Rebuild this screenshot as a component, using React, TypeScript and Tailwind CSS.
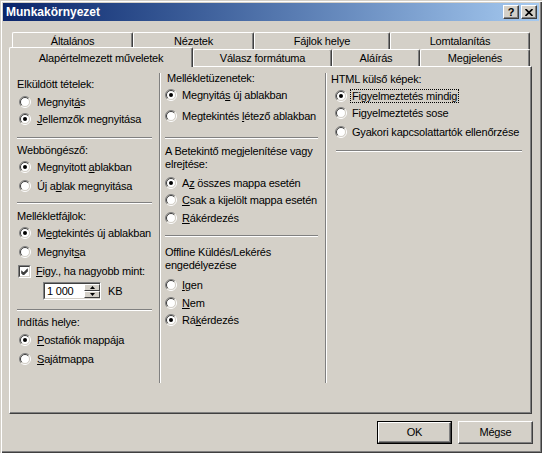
import React from "react";

const FONT = { fontFamily: '"Liberation Sans", Arial, sans-serif' };

// classic win2k radio button
const RadioDot = ({ on }: { on?: boolean }) => (
  <svg width="12" height="12" viewBox="0 0 12 12" className="shrink-0">
    <circle cx="6" cy="6" r="4.5" fill="#fff" />
    <path d="M2.1 9.9 A5.5 5.5 0 0 1 9.9 2.1" stroke="#808080" fill="none" />
    <path d="M9.9 2.1 A5.5 5.5 0 0 1 2.1 9.9" stroke="#fff" fill="none" />
    <path d="M2.8 9.2 A4.5 4.5 0 0 1 9.2 2.8" stroke="#404040" fill="none" />
    <path d="M9.2 2.8 A4.5 4.5 0 0 1 2.8 9.2" stroke="#d4d0c8" fill="none" />
    {on && <circle cx="6" cy="6" r="2" fill="#000" />}
  </svg>
);

const Radio = ({
  on,
  children,
  className = "",
  gap = "ml-[6px]",
}: {
  on?: boolean;
  children: React.ReactNode;
  className?: string;
  gap?: string;
}) => (
  <div className={`flex items-center h-[16px] whitespace-nowrap ${className}`}>
    <RadioDot on={on} />
    <span className={gap}>{children}</span>
  </div>
);

const Label = ({ children, className = "" }: { children: React.ReactNode; className?: string }) => (
  <div className={`flex items-center h-[16px] whitespace-nowrap ${className}`}>{children}</div>
);

const Sep = ({ className = "" }: { className?: string }) => (
  <div className={`h-[2px] border-t border-t-[#808080] border-b border-b-white ${className}`} />
);

const VLine = () => <div className="mt-[3px] h-[310px] w-[2px] border-l border-l-[#808080] border-r border-r-white shrink-0" />;

const Tab = ({ label, w }: { label: string; w: string }) => (
  <div
    className={`${w} h-[17px] flex items-center justify-center border-l border-t border-white border-r border-r-[#404040] rounded-tl-[2px] rounded-tr-[2px] shadow-[inset_-1px_0_#808080] whitespace-nowrap`}
  >
    {label}
  </div>
);

const TitleBtn = ({ children }: { children: React.ReactNode }) => (
  <div className="w-[16px] h-[14px] flex items-center justify-center bg-[#d4d0c8] border-t border-l border-white border-r border-b border-r-[#404040] border-b-[#404040] shadow-[inset_-1px_-1px_#808080]">
    {children}
  </div>
);

export default function App() {
  return (
    <div
      className="w-[542px] h-[453px] bg-[#d4d0c8] p-[3px] text-[11px] tracking-[-0.2px] text-black shadow-[inset_1px_1px_#d4d0c8,inset_2px_2px_#fff,inset_-1px_-1px_#404040,inset_-2px_-2px_#808080] flex flex-col overflow-hidden"
      style={FONT}
    >
      {/* title bar */}
      <div className="h-[18px] flex items-center bg-linear-to-r from-[#0a246a] to-[#a6caf0] pl-[3px] pr-[2px]">
        <span className="text-white font-bold text-[12px] tracking-normal">Munkakörnyezet</span>
        <div className="ml-auto flex gap-[2px]">
          <TitleBtn>
            <span className="font-bold text-[11px] leading-none">?</span>
          </TitleBtn>
          <TitleBtn>
            <svg width="8" height="7" viewBox="0 0 8 7">
              <path d="M0.5 0 L7.5 7 M7.5 0 L0.5 7" stroke="#000" strokeWidth="1.6" />
            </svg>
          </TitleBtn>
        </div>
      </div>

      {/* tabs */}
      <div className="mt-[11px] flex pl-[9px]">
        <Tab label="Általános" w="w-[121px]" />
        <Tab label="Nézetek" w="w-[121px]" />
        <Tab label="Fájlok helye" w="w-[136px]" />
        <Tab label="Lomtalanítás" w="w-[140px]" />
      </div>
      <div className="flex pl-[6px] h-[17px]">
        <div className="relative z-10 -mt-[2px] w-[184px] h-[20px] bg-[#d4d0c8] flex justify-center pt-[2px] border-l border-t border-white border-r border-r-[#404040] rounded-tl-[2px] rounded-tr-[2px] shadow-[inset_-1px_0_#808080] whitespace-nowrap">
          Alapértelmezett műveletek
        </div>
        <Tab label="Válasz formátuma" w="w-[139px]" />
        <Tab label="Aláírás" w="w-[88px]" />
        <Tab label="Megjelenés" w="w-[110px]" />
      </div>

      {/* panel */}
      <div className="ml-[6px] w-[523px] h-[348px] border-t border-l border-white border-r border-b border-r-[#404040] border-b-[#404040] shadow-[inset_-1px_-1px_#808080] pt-[3px] pl-[7px] flex">
        {/* column 1 */}
        <div className="w-[135px] mr-[7px] pt-[6px] flex flex-col shrink-0">
          <Label>Elküldött tételek:</Label>
          <Radio className="mt-[2px] ml-[2px]">
            Megnyit<u>á</u>s
          </Radio>
          <Radio on className="mt-[1px] ml-[2px]">
            <u>J</u>ellemzők megnyitása
          </Radio>
          <Sep className="mt-[10px]" />
          <Label className="mt-[3px]">Webböngésző:</Label>
          <Radio on className="mt-[1px] ml-[2px]">
            Megnyitott <u>a</u>blakban
          </Radio>
          <Radio className="mt-[3px] ml-[2px]">
            Új a<u>b</u>lak megnyitása
          </Radio>
          <Sep className="mt-[8px]" />
          <Label className="mt-[4px]">Mellékletfájlok:</Label>
          <Radio on className="mt-[1px] ml-[2px]">
            M<u>e</u>gtekintés új ablakban
          </Radio>
          <Radio className="mt-[3px] ml-[2px]">
            Megnyit<u>s</u>a
          </Radio>
          <div className="mt-[3px] ml-[1px] h-[16px] flex items-center whitespace-nowrap">
            <div className="w-[13px] h-[13px] border-t border-l border-[#808080] border-r border-b border-r-white border-b-white">
              <div className="w-[11px] h-[11px] bg-white border-t border-l border-[#404040] border-r border-b border-r-[#d4d0c8] border-b-[#d4d0c8] flex items-center justify-center">
                <svg width="7" height="7" viewBox="0 0 7 7">
                  <path d="M0 2.5 L2.5 5 L7 0.5 M0 3.5 L2.5 6 L7 1.5 M0 4.5 L2.5 7 L7 2.5" stroke="#000" fill="none" strokeWidth="1" />
                </svg>
              </div>
            </div>
            <span className="ml-[5px]">
              <u>F</u>igy., ha nagyobb mint:
            </span>
          </div>
          <div className="mt-[3px] h-[18px] flex items-center">
            <div className="ml-[26px] w-[58px] h-[18px] flex border-t border-l border-[#808080] border-r border-b border-r-white border-b-white">
              <div className="flex-1 flex bg-white border-t border-l border-[#404040] border-r-0 border-b border-b-[#d4d0c8]">
                <span className="pl-[2px] leading-[14px]">1 000</span>
                <div className="ml-auto w-[16px] flex flex-col bg-[#d4d0c8]">
                  <div className="h-[7px] flex items-center justify-center border-t border-l border-white border-r border-b border-r-[#404040] border-b-[#404040]">
                    <svg width="5" height="3" viewBox="0 0 5 3">
                      <path d="M2.5 0 L5 3 L0 3 Z" fill="#000" />
                    </svg>
                  </div>
                  <div className="h-[7px] flex items-center justify-center border-t border-l border-white border-r border-b border-r-[#404040] border-b-[#404040]">
                    <svg width="5" height="3" viewBox="0 0 5 3">
                      <path d="M0 0 L5 0 L2.5 3 Z" fill="#000" />
                    </svg>
                  </div>
                </div>
              </div>
            </div>
            <span className="ml-[7px]">KB</span>
          </div>
          <Sep className="mt-[9px]" />
          <Label className="mt-[3px]">Indítás helye:</Label>
          <Radio on className="mt-[2px] ml-[2px]">
            <u>P</u>ostafiók mappája
          </Radio>
          <Radio className="mt-[3px] ml-[2px]">
            <u>S</u>ajátmappa
          </Radio>
        </div>

        <VLine />

        {/* column 2 */}
        <div className="w-[153px] ml-[4px] mr-[7px] flex flex-col shrink-0">
          <Label className="ml-[2px]">Mellékletüzenetek:</Label>
          <Radio on gap="ml-[5px]" className="mt-[1px]">
            Megnyitá<u>s</u> új ablakban
          </Radio>
          <Radio gap="ml-[5px]" className="mt-[5px]">
            Megtekintés <u>l</u>étező ablakban
          </Radio>
          <Sep className="mt-[13px]" />
          <div className="mt-[6px] leading-[13px] whitespace-nowrap">
            A Betekintő megjelenítése vagy
            <br />
            elrejtése:
          </div>
          <Radio on gap="ml-[5px]" className="mt-[4px] h-[15px]">
            A<u>z</u> összes mappa esetén
          </Radio>
          <Radio gap="ml-[5px]" className="mt-[1px] h-[15px]">
            <u>C</u>sak a kijelölt mappa esetén
          </Radio>
          <Radio gap="ml-[5px]" className="mt-[2px]">
            <u>R</u>ákérdezés
          </Radio>
          <Sep className="mt-[9px]" />
          <div className="mt-[9px] leading-[13px] whitespace-nowrap">
            Offline Küldés/Lekérés
            <br />
            engedélyezése
          </div>
          <Radio gap="ml-[5px]" className="mt-[5px]">
            <u>I</u>gen
          </Radio>
          <Radio gap="ml-[5px]" className="mt-[2px]">
            <u>N</u>em
          </Radio>
          <Radio on gap="ml-[5px]" className="mt-[1px]">
            Rá<u>k</u>érdezés
          </Radio>
        </div>

        <VLine />

        {/* column 3 */}
        <div className="w-[191px] ml-[4px] pt-[1px] flex flex-col shrink-0">
          <Label>HTML külső képek:</Label>
          <Radio on gap="ml-[3px]" className="mt-[1px] ml-[4px]">
            <span className="border border-dotted border-black px-[1px]">Figyelmeztetés mindig</span>
          </Radio>
          <Radio gap="ml-[5px]" className="mt-[1px] ml-[4px]">
            Figyelmeztetés sose
          </Radio>
          <Radio gap="ml-[5px]" className="mt-[3px] ml-[4px]">
            Gyakori kapcsolattartók ellenőrzése
          </Radio>
          <Sep className="mt-[10px] ml-[5px] w-[186px]" />
        </div>
      </div>

      {/* buttons */}
      <div className="mt-[7px] flex justify-end gap-[6px] pr-[6px]">
        <div className="w-[75px] h-[23px] border border-black">
          <div className="w-full h-full flex items-center justify-center border-t border-l border-white border-r border-b border-r-[#404040] border-b-[#404040] shadow-[inset_-1px_-1px_#808080]">
            OK
          </div>
        </div>
        <div className="w-[75px] h-[23px] flex items-center justify-center border-t border-l border-white border-r border-b border-r-[#404040] border-b-[#404040] shadow-[inset_-1px_-1px_#808080]">
          Mégse
        </div>
      </div>
    </div>
  );
}
